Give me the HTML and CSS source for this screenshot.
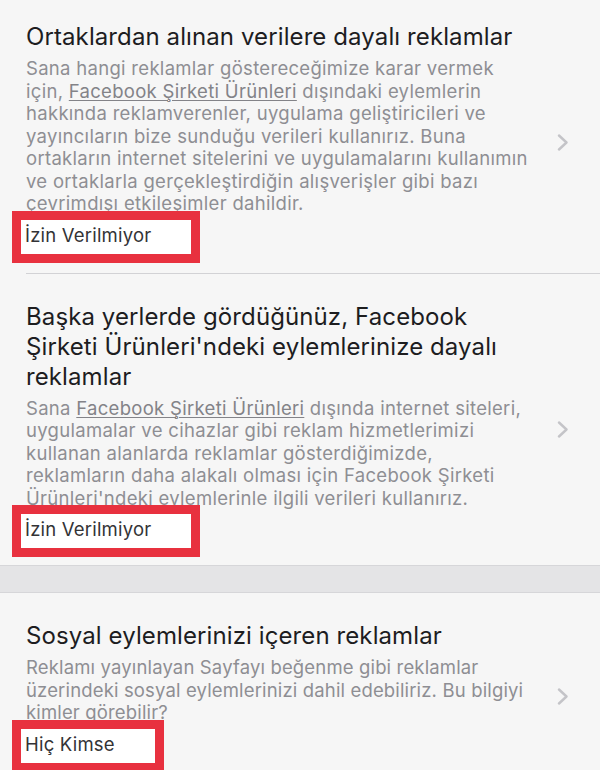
FILE: index.html
```html
<!DOCTYPE html>
<html lang="tr">
<head>
  <meta charset="UTF-8">
  <meta name="viewport" content="width=device-width, initial-scale=1.0">
  <title>Reklam Tercihleri</title>
  <link rel="stylesheet" href="styles.css">
</head>
<body>
  <div class="settings">
    <div class="row first">
      <div class="row-text">
        <h3 class="row-title">Ortaklardan alınan verilere dayalı reklamlar</h3>
        <p class="row-desc">Sana hangi reklamlar göstereceğimize karar vermek için, <a href="#">Facebook Şirketi Ürünleri</a> dışındaki eylemlerin hakkında reklamverenler, uygulama geliştiricileri ve yayıncıların bize sunduğu verileri kullanırız. Buna ortakların internet sitelerini ve uygulamalarını kullanımın ve ortaklarla gerçekleştirdiğin alışverişler gibi bazı çevrimdışı etkileşimler dahildir.</p>
        <span class="row-value">İzin Verilmiyor</span>
      </div>
      <svg class="chevron" width="12" height="17" viewBox="0 0 12 17"><polyline points="2,1.5 9.5,8.5 2,15.5" /></svg>
    </div>

    <div class="row">
      <div class="row-text">
        <h3 class="row-title">Başka yerlerde gördüğünüz, Facebook Şirketi Ürünleri'ndeki eylemlerinize dayalı reklamlar</h3>
        <p class="row-desc">Sana <a href="#">Facebook Şirketi Ürünleri</a> dışında internet siteleri, uygulamalar ve cihazlar gibi reklam hizmetlerimizi kullanan alanlarda reklamlar gösterdiğimizde, reklamların daha alakalı olması için Facebook Şirketi Ürünleri'ndeki eylemlerinle ilgili verileri kullanırız.</p>
        <span class="row-value">İzin Verilmiyor</span>
      </div>
      <svg class="chevron" width="12" height="17" viewBox="0 0 12 17"><polyline points="2,1.5 9.5,8.5 2,15.5" /></svg>
    </div>
  </div>

  <div class="group-gap"></div>

  <div class="settings">
    <div class="row">
      <div class="row-text">
        <h3 class="row-title">Sosyal eylemlerinizi içeren reklamlar</h3>
        <p class="row-desc tight">Reklamı yayınlayan Sayfayı beğenme gibi reklamlar üzerindeki sosyal eylemlerinizi dahil edebiliriz. Bu bilgiyi kimler görebilir?</p>
        <span class="row-value">Hiç Kimse</span>
      </div>
      <svg class="chevron" width="12" height="17" viewBox="0 0 12 17"><polyline points="2,1.5 9.5,8.5 2,15.5" /></svg>
    </div>
  </div>
</body>
</html>
```

FILE: styles.css
```css
* {
  margin: 0;
  padding: 0;
  box-sizing: border-box;
}
body {
  font-family: Inter, "Noto Sans", sans-serif;
  background-color: #f6f6f6;
  overflow: hidden;
}
.settings {
  background-color: #f6f6f6;
}
.row {
  display: flex;
  align-items: center;
  margin-left: 26px;
  padding: 28px 0 8px 0;
  border-bottom: 1px solid #d2d2d5;
}
.row.first {
  padding-top: 22px;
  padding-bottom: 10px;
}
.settings .row:last-child {
  border-bottom: none;
}
.row-text {
  width: 505px;
  display: flex;
  flex-direction: column;
  align-items: flex-start;
}
.row-title {
  font-size: 24px;
  font-weight: 400;
  line-height: 30px;
  color: #1d1d1f;
  letter-spacing: 0.1px;
}
.row-desc {
  margin-top: 5px;
  font-size: 18.5px;
  line-height: 22.5px;
  color: #8e8e93;
  letter-spacing: 0.3px;
}
.row-desc.tight {
  letter-spacing: 0.15px;
}
.row-desc a {
  color: #838388;
  text-decoration: underline;
  text-underline-offset: 2px;
  text-decoration-thickness: 1px;
}
/* the red marker drawn round the current value */
.row-value {
  position: relative;
  margin: -4px 0 0 -14px;
  padding: 4px 40px 8px 4px;
  border: 9px solid #e8313f;
  background-color: #fff;
  font-size: 18.5px;
  line-height: 22px;
  letter-spacing: 0.2px;
  color: #333336;
}
.chevron {
  flex-shrink: 0;
  margin-left: 26px;
}
.chevron polyline {
  fill: none;
  stroke: #c4c4c8;
  stroke-width: 2.4;
  stroke-linecap: round;
  stroke-linejoin: round;
}
.group-gap {
  height: 28px;
  background-color: #e4e4e6;
  border-top: 1px solid #d6d6d9;
  border-bottom: 1px solid #d6d6d9;
}
```
